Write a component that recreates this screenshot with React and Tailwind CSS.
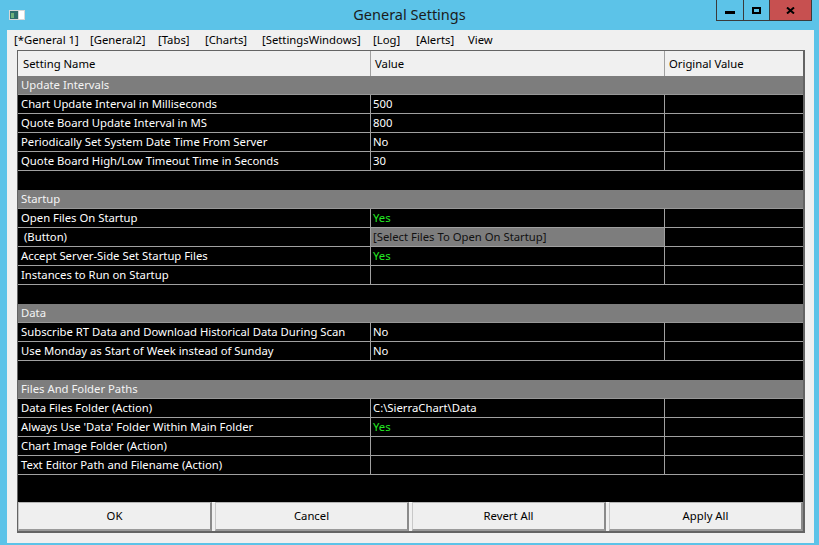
import React from 'react';

const sections = [
  {
    title: 'Update Intervals',
    rows: [
      { name: 'Chart Update Interval in Milliseconds', value: '500' },
      { name: 'Quote Board Update Interval in MS', value: '800' },
      { name: 'Periodically Set System Date Time From Server', value: 'No' },
      { name: 'Quote Board High/Low Timeout Time in Seconds', value: '30' },
    ],
    blank: true,
  },
  {
    title: 'Startup',
    rows: [
      { name: 'Open Files On Startup', value: 'Yes', green: true },
      { name: ' (Button)', value: '[Select Files To Open On Startup]', button: true },
      { name: 'Accept Server-Side Set Startup Files', value: 'Yes', green: true },
      { name: 'Instances to Run on Startup', value: '' },
    ],
    blank: true,
  },
  {
    title: 'Data',
    rows: [
      { name: 'Subscribe RT Data and Download Historical Data During Scan', value: 'No' },
      { name: 'Use Monday as Start of Week instead of Sunday', value: 'No' },
    ],
    blank: true,
  },
  {
    title: 'Files And Folder Paths',
    rows: [
      { name: 'Data Files Folder (Action)', value: 'C:\\SierraChart\\Data' },
      { name: "Always Use 'Data' Folder Within Main Folder", value: 'Yes', green: true },
      { name: 'Chart Image Folder (Action)', value: '' },
      { name: 'Text Editor Path and Filename (Action)', value: '' },
    ],
    blank: false,
  },
];

const menu = [
  { label: '[*General 1]', w: 'w-[76px]' },
  { label: '[General2]', w: 'w-[68px]' },
  { label: '[Tabs]', w: 'w-[47px]' },
  { label: '[Charts]', w: 'w-[57px]' },
  { label: '[SettingsWindows]', w: 'w-[111px]' },
  { label: '[Log]', w: 'w-[43px]' },
  { label: '[Alerts]', w: 'w-[52px]' },
  { label: 'View', w: 'w-[40px]' },
];

function SettingRow({ row }) {
  return (
    <div className="flex h-[19px] border-b border-[#a0a0a0] bg-black text-white">
      <div className="w-[353px] shrink-0 border-r border-[#a0a0a0] pl-[3px] pt-[1px] flex items-center whitespace-pre">
        {row.name}
      </div>
      <div
        className={
          'w-[294px] shrink-0 border-r border-[#a0a0a0] pl-[2px] pt-[1px] flex items-center ' +
          (row.button ? 'bg-[#7d7d7d] text-[#111]' : row.green ? 'text-[#22e822]' : 'text-white')
        }
      >
        {row.value}
      </div>
      <div className="flex-1" />
    </div>
  );
}

function App() {
  return (
    <div
      className="w-[819px] h-[545px] bg-[#5cc3e8] flex flex-col overflow-hidden text-[11.3px]"
      style={{ fontFamily: '"Noto Sans", "Open Sans", sans-serif' }}
    >
      {/* title bar */}
      <div className="h-[30px] flex items-start shrink-0">
        <div className="w-[300px] pl-[9px] pt-[10px]">
          <svg width="16" height="10" viewBox="0 0 16 10">
            <rect x="0" y="0" width="16" height="10" fill="#d8d8d8" />
            <rect x="1" y="1" width="8" height="8" fill="#2f6d6a" />
            <rect x="2" y="3" width="3" height="5" fill="#6fb07a" />
            <rect x="10" y="1" width="5" height="8" fill="#ffffff" />
          </svg>
        </div>
        <div className="flex-1 text-center text-[14.5px] text-[#1b1b1b] pt-[4px]">General Settings</div>
        <div className="w-[300px] flex justify-end pr-[7px]">
          <div className="flex h-[21px] border border-t-0 border-[#3a3a3a]">
            <div className="w-[27px] flex items-center justify-center border-r border-[#3a3a3a]">
              <div className="w-[10px] h-[3px] bg-black mt-[4px]" />
            </div>
            <div className="w-[26px] flex items-center justify-center border-r border-[#3a3a3a]">
              <div className="w-[9px] h-[7px] border-2 border-black" />
            </div>
            <div className="w-[41px] flex items-center justify-center bg-[#c75050]">
              <svg width="9" height="7" viewBox="0 0 9 7">
                <path d="M1 0.5 L8 6.5 M8 0.5 L1 6.5" stroke="#000" strokeWidth="2" />
              </svg>
            </div>
          </div>
        </div>
      </div>

      {/* client area */}
      <div className="flex-1 ml-[7px] mr-[5px] mb-[2px] bg-[#f0f0f0] flex flex-col">
        <div className="h-[20px] flex items-center pl-[7px] text-black">
          {menu.map((m) => (
            <div key={m.label} className={m.w + ' shrink-0 whitespace-nowrap'}>
              {m.label}
            </div>
          ))}
        </div>

        <div className="flex-1 ml-[10px] mr-[9px] mb-[10px] border-t border-l border-r-2 border-b-2 border-[#646464] flex flex-col bg-black">
          {/* header */}
          <div className="h-[25px] flex bg-[#f0f0f0] text-black shrink-0">
            <div className="w-[353px] border-r border-[#a0a0a0] pl-[5px] flex items-center pt-[2px]">Setting Name</div>
            <div className="w-[294px] border-r border-[#a0a0a0] pl-[4px] flex items-center pt-[2px]">Value</div>
            <div className="flex-1 pl-[4px] flex items-center pt-[2px]">Original Value</div>
          </div>

          {sections.map((s) => (
            <div key={s.title} className="shrink-0">
              <div className="h-[19px] bg-[#7d7d7d] text-[#f4f4f4] pl-[3px] pt-[1px] flex items-center border-b border-[#989898]">
                {s.title}
              </div>
              {s.rows.map((r) => (
                <SettingRow key={r.name} row={r} />
              ))}
              {s.blank && <div className="h-[19px] bg-black" />}
            </div>
          ))}

          <div className="flex-1 bg-black" />

          <div className="h-[29px] grid grid-cols-4 gap-[3px] bg-[#f0f0f0] shrink-0">
            {['OK', 'Cancel', 'Revert All', 'Apply All'].map((b) => (
              <div
                key={b}
                className="flex items-center justify-center pt-[1px] text-black bg-[#efefef] border border-t-[#b5b5b5] border-l-[#c8c8c8] border-r-2 border-b-2 border-r-[#8a8a8a] border-b-[#9a9a9a]"
              >
                {b}
              </div>
            ))}
          </div>
        </div>
      </div>
    </div>
  );
}

export default App;
